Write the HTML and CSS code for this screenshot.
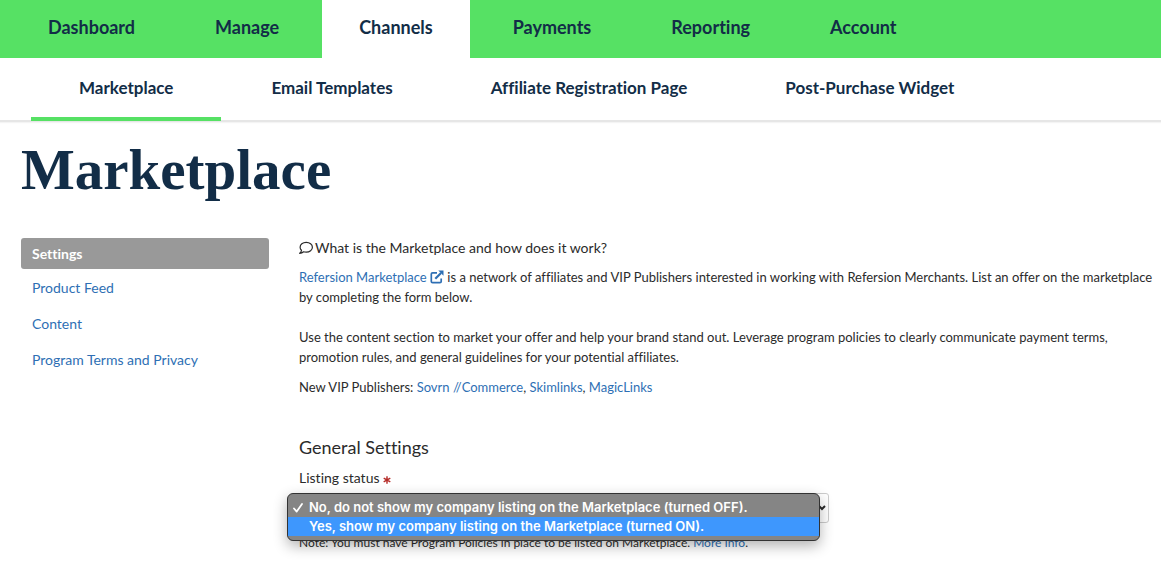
FILE: index.html
```html
<!DOCTYPE html>
<html lang="en">
<head>
<meta charset="utf-8">
<title>Marketplace</title>
<link rel="stylesheet" href="styles.css">
</head>
<body>
<header>
  <nav class="main-nav" aria-label="Main">
    <a href="#">Dashboard</a>
    <a href="#">Manage</a>
    <a href="#" class="current">Channels</a>
    <a href="#">Payments</a>
    <a href="#">Reporting</a>
    <a href="#">Account</a>
  </nav>
  <nav class="sub-nav" aria-label="Channels">
    <a href="#" class="current">Marketplace</a>
    <a href="#">Email Templates</a>
    <a href="#">Affiliate Registration Page</a>
    <a href="#">Post-Purchase Widget</a>
  </nav>
</header>
<main class="page">
  <h1>Marketplace</h1>
  <div class="columns">
    <nav class="side-nav" aria-label="Marketplace sections">
      <a href="#" class="current">Settings</a>
      <a href="#">Product Feed</a>
      <a href="#">Content</a>
      <a href="#">Program Terms and Privacy</a>
    </nav>
    <section class="content">
      <h2 class="question"><svg class="bubble" viewBox="0 0 14 14" aria-hidden="true"><path d="M7.200 1.300C3.700 1.300 1.100 3.500 1.100 6.200c0 1.200.5 2.300 1.400 3.100-.2 1.200-.9 2.200-1.800 3 1.600 0 2.900-.6 3.900-1.500.8.300 1.700.4 2.600.4 3.500 0 6.200-2.200 6.200-5s-2.700-4.900-6.200-4.900z" fill="none" stroke="currentColor" stroke-width="1.200" stroke-linejoin="round"/></svg>What is the Marketplace and how does it work?</h2>
      <p><a href="#">Refersion Marketplace <svg class="external" viewBox="0 0 14 14" aria-hidden="true"><path d="M7 2.800H2.600A1.300 1.300 0 0 0 1.300 4.100v7.300a1.300 1.300 0 0 0 1.300 1.300h7.300a1.300 1.300 0 0 0 1.300-1.300V8.500" fill="none" stroke="currentColor" stroke-width="1.700"/><path d="M5.300 8.700 11 3" stroke="currentColor" stroke-width="2.200"/><path d="M8.300.5h5.200v5.200z" fill="currentColor"/></svg></a> is a network of affiliates and VIP Publishers interested in working with Refersion Merchants. List an offer on the marketplace by completing the form below.</p>
      <p class="policy">Use the content section to market your offer and help your brand stand out. Leverage program policies to clearly communicate payment terms, promotion rules, and general guidelines for your potential affiliates.</p>
      <p>New VIP Publishers: <a href="#">Sovrn //Commerce</a>, <a href="#">Skimlinks</a>, <a href="#">MagicLinks</a></p>
      <h2 class="section-title">General Settings</h2>
      <label for="status">Listing status <svg class="required" viewBox="0 0 8 8" role="img" aria-label="required"><path d="M4 .2v7.600M.7 2.100l6.600 3.800M7.300 2.100.7 5.900" stroke="currentColor" stroke-width="1.400"/></svg></label>
      <div class="picker">
        <select id="status"><option>No, do not show my company listing on the Marketplace (turned OFF).</option><option>Yes, show my company listing on the Marketplace (turned ON).</option></select>
        <svg class="arrow" viewBox="0 0 8 6" aria-hidden="true"><path d="M1 1l3 3 3-3" fill="none" stroke="currentColor" stroke-width="2"/></svg>
        <ul class="menu" role="listbox" aria-label="Listing status">
          <li role="option" aria-selected="true"><svg class="check" viewBox="0 0 10 10" aria-hidden="true"><path d="M1 5.500 3.700 8.600 9 1" fill="none" stroke="currentColor" stroke-width="1.800" stroke-linecap="round" stroke-linejoin="round"/></svg>No, do not show my company listing on the Marketplace (turned OFF).</li>
          <li role="option" aria-selected="false" class="active">Yes, show my company listing on the Marketplace (turned ON).</li>
        </ul>
      </div>
      <p class="note">Note: You must have Program Policies in place to be listed on Marketplace. <a href="#">More Info</a>.</p>
    </section>
  </div>
</main>
</body>
</html>
```
FILE: styles.css
```css
* { box-sizing: border-box; }
body {
  margin: 0;
  background: #fff;
  color: #2b2b2b;
  font: 14px/20px Lato, sans-serif;
  font-variant-ligatures: none;
}
a { color: #2e6fb4; text-decoration: none; }
.main-nav {
  display: flex;
  gap: 6px;
  padding-left: 11px;
  background: #56e164;
}
.main-nav a {
  padding: 15px 37px 19px;
  color: #122d47;
  font-size: 18px;
  font-weight: 700;
  line-height: 24px;
}
.main-nav .current { background: #fff; }
.sub-nav {
  display: flex;
  gap: 2px;
  padding-left: 31px;
  border-bottom: 2px solid #e6e6e6;
  box-shadow: 0 1px 1px #f4f4f4;
}
.sub-nav a {
  padding: 18px 48px 17px;
  border-bottom: 4px solid transparent;
  margin-bottom: -1px;
  color: #122d47;
  font-size: 17px;
  font-weight: 700;
  line-height: 24px;
}
.sub-nav .current { border-color: #56e164; }
.page { padding: 16px 8px 12px 21px; }
h1 {
  margin: 0 0 36px;
  color: #122d47;
  font: 700 57px/64px "Liberation Serif", serif;
}
.columns {
  display: grid;
  grid-template-columns: 248px 1fr;
  gap: 30px;
}
.side-nav {
  display: flex;
  flex-direction: column;
  gap: 5px;
}
.side-nav a {
  padding: 6px 11px 5px;
  border-radius: 3px;
}
.side-nav a:nth-child(2) { margin-top: -2px; }
.side-nav .current { background: #999; color: #fff; font-weight: 700; }
h2 { margin: 0; font-weight: 400; }
.question { margin-bottom: 9px; font-size: 14px; line-height: 20px; }
p { margin: 0 0 10px; font-size: 13px; }
.policy { margin-top: 20px; }
.bubble, .external { width: 14px; height: 14px; vertical-align: -2px; }
.bubble { margin-right: 2px; }
.section-title { margin: 39px 0 10px; font-size: 18px; line-height: 22px; }
label { display: block; margin-bottom: 5px; }
.required { width: 8px; height: 8px; color: #b52b27; vertical-align: -1px; }
.picker { position: relative; max-width: 530px; }
select {
  display: block;
  width: 100%;
  height: 30px;
  padding: 0 11px;
  appearance: none;
  border: 1px solid #ccc;
  border-radius: 3px;
  background: #fff;
  color: #555;
  font: 14px/20px Lato, sans-serif;
}
.arrow { position: absolute; right: 3px; top: 12px; width: 8px; height: 6px; }
.menu {
  position: absolute;
  top: 0;
  left: -12px;
  right: 9px;
  margin: 0;
  padding: 4px 0;
  border: 1px solid #333;
  border-radius: 6px;
  background: #858585;
  box-shadow: 0 5px 14px rgba(0, 0, 0, .3);
  color: #fff;
  font: 600 13px/19px Inter, sans-serif;
  list-style: none;
}
.menu li { position: relative; padding-left: 21px; white-space: nowrap; }
.menu .active { background: #3e97fd; }
.check { position: absolute; left: 5px; top: 5px; width: 10px; height: 10px; }
.note { margin-top: 10px; font-size: 12px; line-height: 20px; }
```
